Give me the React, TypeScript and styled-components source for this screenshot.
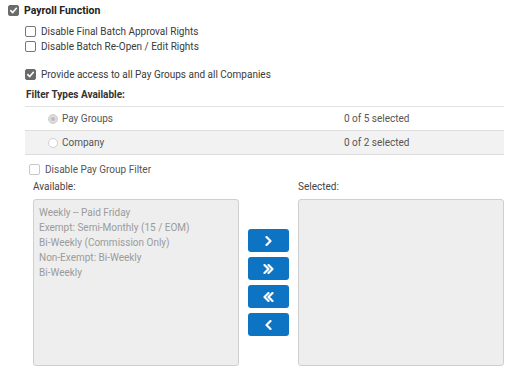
import React from 'react';
import styled, { createGlobalStyle } from 'styled-components';

const GlobalStyle = createGlobalStyle`
  html, body {
    margin: 0;
    padding: 0;
    background: #ffffff;
  }
  body {
    font-family: Roboto, "Liberation Sans", Arial, sans-serif;
    font-size: 10px;
    color: #333333;
  }
`;

const Page = styled.div`
  width: 514px;
  height: 375px;
  padding: 5px 10px 0 8px;
  box-sizing: border-box;
  display: flex;
  flex-direction: column;
`;

const Row = styled.label<{ indent?: number; top?: number; muted?: boolean }>`
  display: flex;
  align-items: center;
  gap: 5px;
  height: 11px;
  line-height: 11px;
  margin-left: ${(p) => p.indent ?? 0}px;
  margin-top: ${(p) => p.top ?? 0}px;
  color: ${(p) => (p.muted ? '#555555' : '#3a3a3a')};
  white-space: nowrap;
`;

const Box = styled.span<{ checked?: boolean; disabled?: boolean }>`
  width: 11px;
  height: 11px;
  box-sizing: border-box;
  border-radius: 2px;
  flex: none;
  display: flex;
  align-items: center;
  justify-content: center;
  border: 1px solid ${(p) => (p.checked ? '#6b6b6b' : p.disabled ? '#c8c8c8' : '#767676')};
  background: ${(p) => (p.checked ? '#6b6b6b' : '#ffffff')};
`;

const Title = styled.span`
  font-weight: 700;
  font-size: 10.5px;
  color: #222222;
`;

const Heading = styled.div`
  font-weight: 700;
  color: #333333;
  margin: 9px 0 0 18px;
  height: 11px;
  line-height: 11px;
`;

const Table = styled.div`
  margin: 6px 0 0 17px;
  border-top: 1px solid #e2e2e2;
`;

const TableRow = styled.div<{ shaded?: boolean }>`
  display: grid;
  grid-template-columns: 319px 1fr;
  align-items: center;
  height: 24px;
  box-sizing: border-box;
  border-bottom: 1px solid #dcdcdc;
  background: ${(p) => (p.shaded ? '#f2f2f2' : '#ffffff')};
  color: #555555;
`;

const RadioCell = styled.div`
  display: flex;
  align-items: center;
  gap: 4px;
  padding-left: 23px;
`;

const Radio = styled.span<{ checked?: boolean }>`
  width: 10px;
  height: 10px;
  box-sizing: border-box;
  border-radius: 50%;
  border: 1px solid #d0d0d0;
  background: ${(p) => (p.checked ? '#dcdcdc' : '#ffffff')};
  display: flex;
  align-items: center;
  justify-content: center;
  &::after {
    content: '';
    width: 4px;
    height: 4px;
    border-radius: 50%;
    background: ${(p) => (p.checked ? '#bdbdbd' : 'transparent')};
  }
`;

const Picker = styled.div`
  display: grid;
  grid-template-columns: 206px 59px 206px;
  grid-template-rows: 12px 167px;
  row-gap: 6px;
  margin: 6px 0 0 25px;
`;

const Caption = styled.div`
  color: #444444;
  line-height: 12px;
`;

const ListBox = styled.div`
  background: #eeeeee;
  border: 1px solid #cfcfcf;
  border-radius: 3px;
  padding: 5px 5px;
  box-sizing: border-box;
  display: flex;
  flex-direction: column;
`;

const ListItem = styled.div`
  color: #9b9b9b;
  line-height: 15px;
`;

const Buttons = styled.div`
  display: flex;
  flex-direction: column;
  align-items: center;
  justify-content: center;
  gap: 5px;
`;

const MoveButton = styled.button`
  width: 41px;
  height: 23px;
  border: none;
  border-radius: 3px;
  background: #0d74c4;
  padding: 0;
  display: flex;
  align-items: center;
  justify-content: center;
  cursor: pointer;
`;

const Check = () => (
  <svg width="9" height="9" viewBox="0 0 10 10">
    <path d="M2 5.2 L4.1 7.3 L8.2 2.6" fill="none" stroke="#ffffff" strokeWidth="1.8" strokeLinecap="round" strokeLinejoin="round" />
  </svg>
);

const Chevron = ({ dir, double }: { dir: 'left' | 'right'; double?: boolean }) => {
  const one = dir === 'right' ? 'M0 0 L4 4 L0 8' : 'M4 0 L0 4 L4 8';
  return (
    <svg width={double ? 11 : 7} height="10" viewBox={double ? '-1 -1 10 10' : '-1 -1 6 10'}>
      <path d={one} fill="none" stroke="#ffffff" strokeWidth="2.2" strokeLinecap="round" strokeLinejoin="round" />
      {double && (
        <path d={one} transform="translate(4 0)" fill="none" stroke="#ffffff" strokeWidth="2.2" strokeLinecap="round" strokeLinejoin="round" />
      )}
    </svg>
  );
};

const payGroups = [
  'Weekly -- Paid Friday',
  'Exempt: Semi-Monthly (15 / EOM)',
  'Bi-Weekly (Commission Only)',
  'Non-Exempt: Bi-Weekly',
  'Bi-Weekly',
];

export default function App() {
  return (
    <>
      <GlobalStyle />
      <Page>
        <Row>
          <Box checked>
            <Check />
          </Box>
          <Title>Payroll Function</Title>
        </Row>
        <Row indent={17} top={10}>
          <Box />
          Disable Final Batch Approval Rights
        </Row>
        <Row indent={17} top={4}>
          <Box />
          Disable Batch Re-Open / Edit Rights
        </Row>
        <Row indent={17} top={17}>
          <Box checked>
            <Check />
          </Box>
          Provide access to all Pay Groups and all Companies
        </Row>
        <Heading>Filter Types Available:</Heading>
        <Table>
          <TableRow>
            <RadioCell>
              <Radio checked />
              Pay Groups
            </RadioCell>
            <span>0 of 5 selected</span>
          </TableRow>
          <TableRow shaded>
            <RadioCell>
              <Radio />
              Company
            </RadioCell>
            <span>0 of 2 selected</span>
          </TableRow>
        </Table>
        <Row indent={21} top={9} muted>
          <Box disabled />
          Disable Pay Group Filter
        </Row>
        <Picker>
          <Caption>Available:</Caption>
          <span />
          <Caption>Selected:</Caption>
          <ListBox>
            {payGroups.map((g) => (
              <ListItem key={g}>{g}</ListItem>
            ))}
          </ListBox>
          <Buttons>
            <MoveButton aria-label="Add">
              <Chevron dir="right" />
            </MoveButton>
            <MoveButton aria-label="Add all">
              <Chevron dir="right" double />
            </MoveButton>
            <MoveButton aria-label="Remove all">
              <Chevron dir="left" double />
            </MoveButton>
            <MoveButton aria-label="Remove">
              <Chevron dir="left" />
            </MoveButton>
          </Buttons>
          <ListBox />
        </Picker>
      </Page>
    </>
  );
}
